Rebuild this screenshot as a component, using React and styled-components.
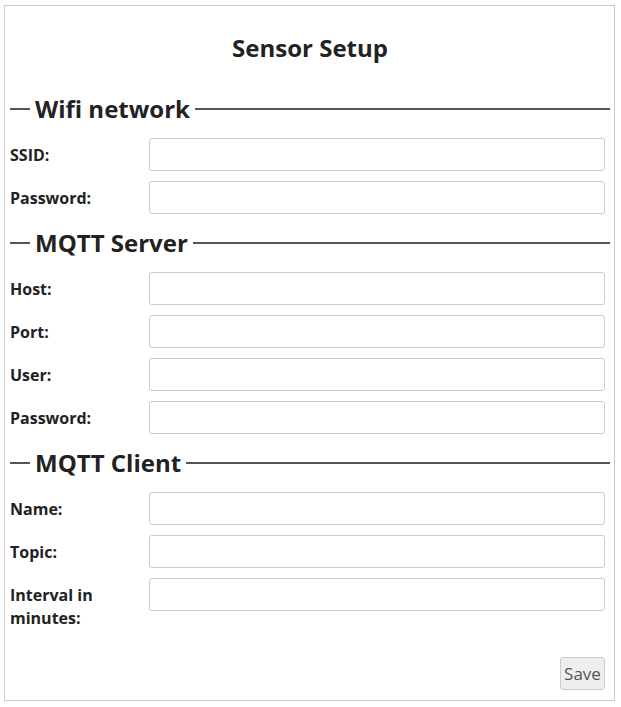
import React from "react";
import styled, { createGlobalStyle } from "styled-components";

const Global = createGlobalStyle`
  html, body { margin: 0; padding: 0; background: #fff; }
  body { font-family: "Open Sans", "Noto Sans", sans-serif; color: #222; }
  * { box-sizing: border-box; }
`;

const Box = styled.div`
  margin: 5px 6px 6px 4px;
  border: 1px solid #ccc;
  padding: 27px 4px 10px 5px;
  display: flex;
  flex-direction: column;
`;

const Title = styled.h1`
  margin: 0 0 30px;
  font-size: 24px;
  line-height: 30px;
  font-weight: 700;
  text-align: center;
  color: #222;
`;

const Section = styled.section`
  display: flex;
  flex-direction: column;
  gap: 10px;
  margin-bottom: 13px;
`;

const Heading = styled.h2`
  margin: 0 0 3px;
  display: flex;
  align-items: center;
  gap: 5px;
  font-size: 24px;
  line-height: 32px;
  font-weight: 700;
  color: #222;
  &::before, &::after {
    content: "";
    height: 2px;
    background: #555;
  }
  &::before { width: 20px; flex: none; }
  &::after { flex: 1; }
`;

const Row = styled.label`
  display: flex;
  align-items: flex-start;
  padding-right: 5px;
`;

const Label = styled.span`
  width: 139px;
  flex: none;
  font-size: 16px;
  font-weight: 700;
  line-height: 23px;
  padding: 6px 10px 0 0;
  color: #222;
`;

const Input = styled.input`
  flex: 1;
  height: 33px;
  border: 1px solid #ccc;
  border-radius: 3px;
  background: #fff;
  font: inherit;
  padding: 0 6px;
  min-width: 0;
`;

const Footer = styled.div`
  display: flex;
  justify-content: flex-end;
  padding-right: 5px;
  margin-top: 14px;
`;

const Button = styled.button`
  height: 33px;
  padding: 0 3px;
  width: 45px;
  border: 1px solid #ccc;
  border-radius: 3px;
  background: #eee;
  color: #555;
  font-family: "Open Sans", sans-serif;
  font-size: 17px;
`;

const sections = [
  { title: "Wifi network", fields: ["SSID:", "Password:"] },
  { title: "MQTT Server", fields: ["Host:", "Port:", "User:", "Password:"] },
  { title: "MQTT Client", fields: ["Name:", "Topic:", "Interval in minutes:"] },
];

export default function App() {
  return (
    <>
      <Global />
      <Box>
        <Title>Sensor Setup</Title>
        {sections.map((s) => (
          <Section key={s.title}>
            <Heading>{s.title}</Heading>
            {s.fields.map((f) => (
              <Row key={f}>
                <Label>{f}</Label>
                <Input type="text" />
              </Row>
            ))}
          </Section>
        ))}
        <Footer>
          <Button>Save</Button>
        </Footer>
      </Box>
    </>
  );
}
